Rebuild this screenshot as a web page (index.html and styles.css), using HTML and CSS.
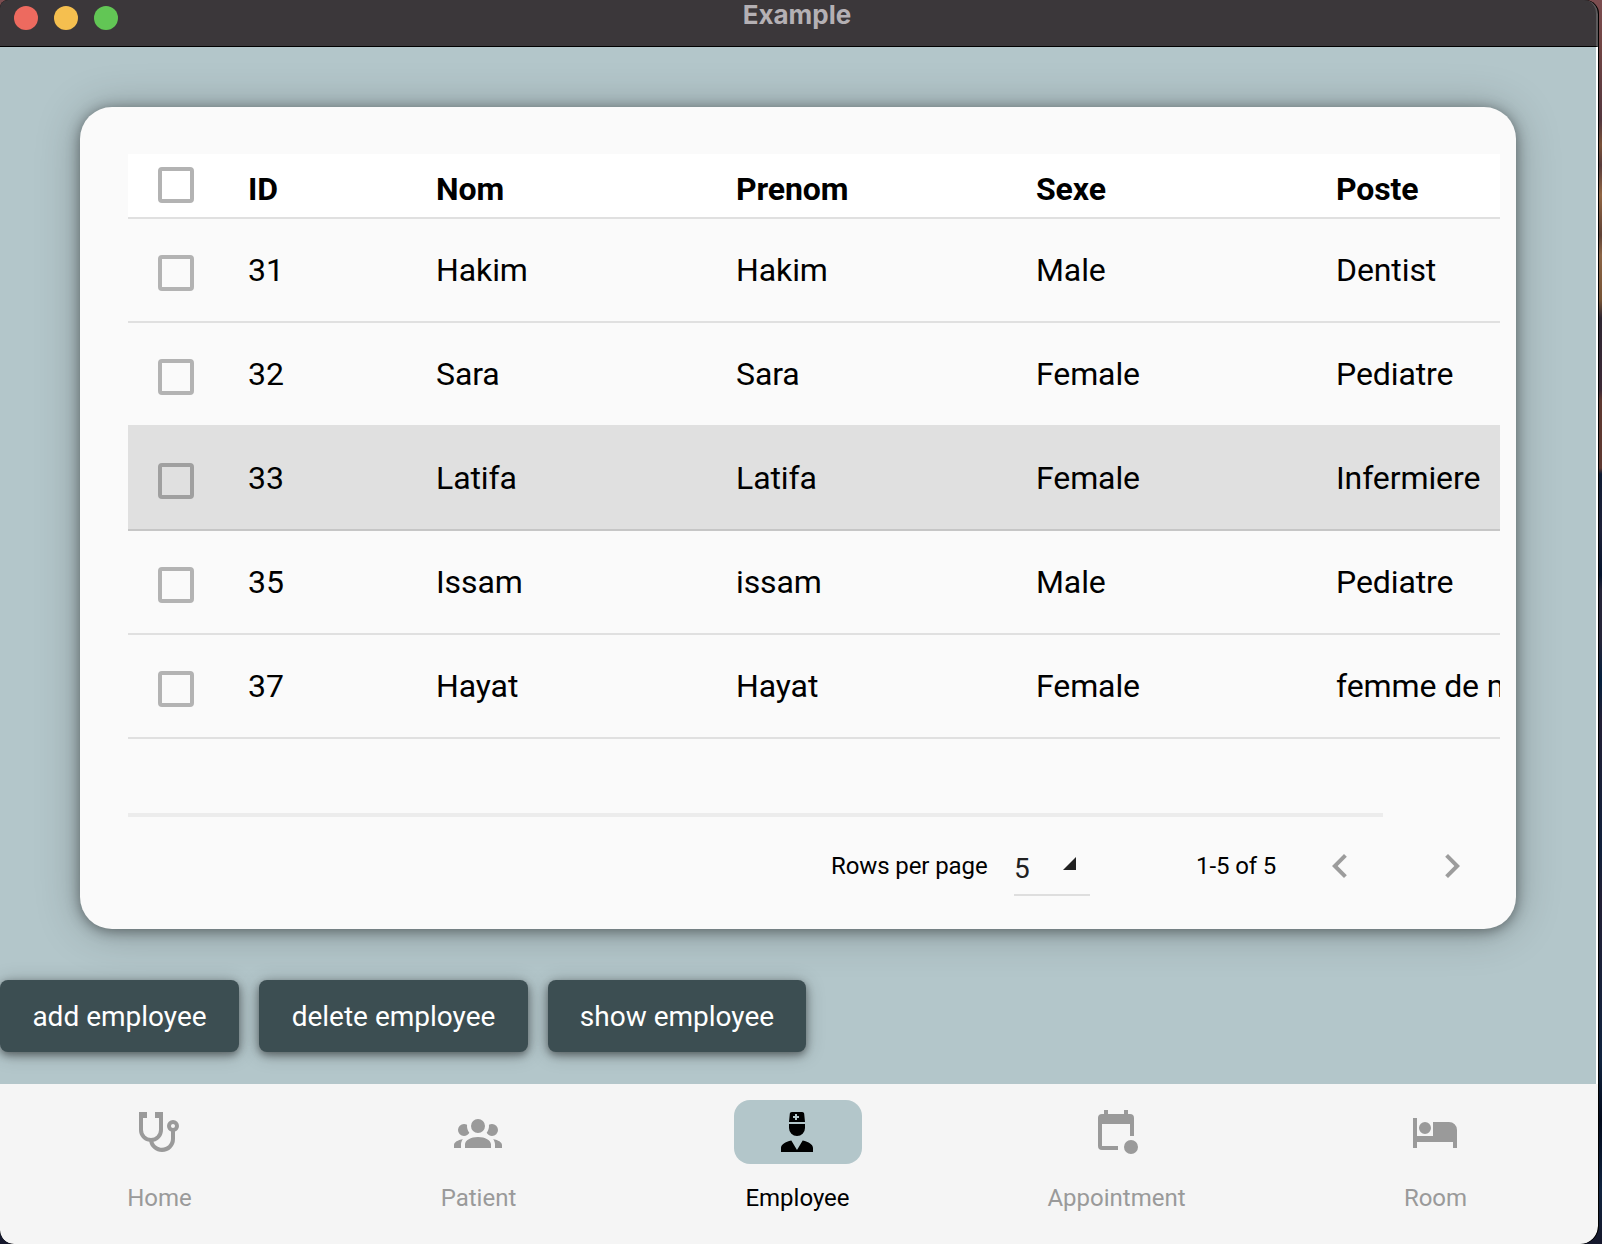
FILE: index.html
```html
<!DOCTYPE html>
<html lang="en">
<head>
<meta charset="utf-8">
<title>Example</title>
<link rel="stylesheet" href="styles.css">
</head>
<body>
<div class="window">
  <header class="titlebar">
    <div class="lights"><span class="light close"></span><span class="light minimize"></span><span class="light expand"></span></div>
    <div class="title">Example</div>
  </header>
  <main class="screen">
    <section class="card">
      <div class="table">
        <div class="row head"><span class="check"></span><span>ID</span><span>Nom</span><span>Prenom</span><span>Sexe</span><span>Poste</span></div>
        <div class="row"><span class="check"></span><span>31</span><span>Hakim</span><span>Hakim</span><span>Male</span><span>Dentist</span></div>
        <div class="row"><span class="check"></span><span>32</span><span>Sara</span><span>Sara</span><span>Female</span><span>Pediatre</span></div>
        <div class="row hovered"><span class="check"></span><span>33</span><span>Latifa</span><span>Latifa</span><span>Female</span><span>Infermiere</span></div>
        <div class="row"><span class="check"></span><span>35</span><span>Issam</span><span>issam</span><span>Male</span><span>Pediatre</span></div>
        <div class="row"><span class="check"></span><span>37</span><span>Hayat</span><span>Hayat</span><span>Female</span><span>femme de menage</span></div>
      </div>
      <div class="scrollbar"></div>
      <div class="pagination">
        <span class="rows-label">Rows per page</span>
        <span class="select"><span>5</span><svg class="caret" viewBox="0 0 13 13"><path d="M13 0V13H0Z"/></svg></span>
        <span class="range">1-5 of 5</span>
        <svg class="icon previous" viewBox="0 0 24 24"><path d="M15.41 16.58 10.83 12l4.58-4.59L14 6l-6 6 6 6 1.41-1.42Z"/></svg>
        <svg class="icon next" viewBox="0 0 24 24"><path d="M8.59 16.58 13.17 12 8.59 7.41 10 6l6 6-6 6-1.41-1.42Z"/></svg>
      </div>
    </section>
    <div class="actions">
      <button class="button add">add employee</button>
      <button class="button delete">delete employee</button>
      <button class="button show">show employee</button>
    </div>
  </main>
  <nav class="nav">
    <div class="tab"><div class="pill"><svg class="icon" viewBox="0 0 24 24"><path d="M19,8C19.56,8 20,8.43 20,9A1,1 0 0,1 19,10C18.43,10 18,9.55 18,9C18,8.43 18.43,8 19,8M2,2V11C2,13.96 4.19,16.5 7.14,16.91C7.76,19.92 10.42,22 13.5,22A6.5,6.5 0 0,0 20,15.5V11.81C21.16,11.39 22,10.29 22,9A3,3 0 0,0 19,6A3,3 0 0,0 16,9C16,10.29 16.84,11.4 18,11.81V15.41C18,17.91 16,19.92 13.5,19.92C11.5,19.92 9.82,18.7 9.22,16.9C12,16.3 14,13.8 14,11V2H10V5H12V11A4,4 0 0,1 8,15A4,4 0 0,1 4,11V5H6V2H2Z"/></svg></div><span>Home</span></div>
    <div class="tab"><div class="pill"><svg class="icon" viewBox="0 0 24 24"><path d="M12,5.5A3.5,3.5 0 0,1 15.5,9A3.5,3.5 0 0,1 12,12.5A3.5,3.5 0 0,1 8.5,9A3.5,3.5 0 0,1 12,5.5M5,8C5.56,8 6.08,8.15 6.53,8.42C6.38,9.85 6.8,11.27 7.66,12.38C7.16,13.34 6.16,14 5,14A3,3 0 0,1 2,11A3,3 0 0,1 5,8M19,8A3,3 0 0,1 22,11A3,3 0 0,1 19,14C17.84,14 16.84,13.34 16.34,12.38C17.2,11.27 17.62,9.85 17.47,8.42C17.92,8.15 18.44,8 19,8M5.5,18.25C5.5,16.18 8.41,14.5 12,14.5C15.59,14.5 18.5,16.18 18.5,18.25V20H5.5V18.25M0,20V18.5C0,17.11 1.89,15.94 4.45,15.6C3.86,16.28 3.5,17.22 3.5,18.25V20H0M24,20H20.5V18.25C20.5,17.22 20.14,16.28 19.55,15.6C22.11,15.94 24,17.11 24,18.5V20Z"/></svg></div><span>Patient</span></div>
    <div class="tab active"><div class="pill"><svg class="icon" viewBox="0 0 24 24"><path d="M14.84,16.26C17.86,16.83 20,18.29 20,20V22H4V20C4,18.29 6.14,16.83 9.16,16.26L12,21L14.84,16.26M8,8H16V10A4,4 0 0,1 12,14A4,4 0 0,1 8,10V8M8,7L8.41,2.9C8.46,2.39 8.89,2 9.41,2H14.6C15.11,2 15.54,2.39 15.59,2.9L16,7H8M12,3H11V4H10V5H11V6H12V5H13V4H12V3Z"/></svg></div><span>Employee</span></div>
    <div class="tab"><div class="pill"><svg class="icon" viewBox="0 0 24 24"><path d="M6 1H8V3H16V1H18V3H19A2 2 0 0 1 21 5V14H19V8H5V19H13V21H5A2 2 0 0 1 3 19V5A2 2 0 0 1 5 3H6ZM19.5 16A3.5 3.5 0 1 1 19.5 23A3.5 3.5 0 1 1 19.5 16Z"/></svg></div><span>Appointment</span></div>
    <div class="tab"><div class="pill"><svg class="icon" viewBox="0 0 24 24"><path d="M19,7H11V14H3V5H1V20H3V17H21V20H23V11A4,4 0 0,0 19,7M7,13A3,3 0 0,0 10,10A3,3 0 0,0 7,7A3,3 0 0,0 4,10A3,3 0 0,0 7,13Z"/></svg></div><span>Room</span></div>
  </nav>
</div>
</body>
</html>
```

FILE: styles.css
```css
* { box-sizing: border-box; }
body {
  margin: 0;
  height: 1244px;
  overflow: hidden;
  font-family: Roboto, "Liberation Sans", sans-serif;
  color: #000;
  background: linear-gradient(#7c4d50 0, #704443 50px, #54373f 120px, #7a5138 145px, #593c3c 165px, #916542 195px, #604236 235px, #8b6445 255px, #765335 300px, #2e2632 318px, #3c2936 390px, #5e3830 400px, #5e3830 468px, #101c34 474px, #1d2038 530px, #04142e 575px, #252438 590px, #252438 640px, #04203f 680px, #221f35 720px, #10203c 850px, #221f35 900px, #10233f 1060px, #020a1c 1120px, #10233f 1190px, #16182c 1244px);
}
.window {
  display: flex;
  flex-direction: column;
  width: 1599px;
  height: 1244px;
  overflow: hidden;
  border-right: 1px solid #000;
  border-radius: 8px 14px 18px 14px;
  background: #000;
}
.titlebar {
  display: grid;
  grid-template-columns: 1fr auto 1fr;
  height: 47px;
  padding-right: 2px;
  background: #3b373a;
  border-bottom: 1px solid #000;
  border-right: 2px solid #5b595b;
  border-top-right-radius: 14px;
}
.lights { display: flex; gap: 16px; padding: 6px 0 0 14px; }
.light { width: 24px; height: 24px; border-radius: 50%; }
.close { background: #ed6a5f; }
.minimize { background: #f5bf4f; }
.expand { background: #62c655; }
.title { font: 700 26px/29px Inter, sans-serif; color: #b4b0b4; }
.screen {
  display: flex;
  flex-direction: column;
  height: 1037px;
  padding-top: 59.5px;
  background: #b3c6ca;
  border-right: 2px solid #fff;
  overflow: hidden;
}
.card {
  display: flex;
  flex-direction: column;
  width: 1436px;
  height: 822px;
  margin-left: 80px;
  padding: 47.5px 16px 0 48px;
  border-radius: 32px;
  background: #fafafa;
  box-shadow: 0 2px 14px rgba(0,0,0,.42), 0 2px 44px rgba(0,0,0,.26);
}
.table { height: 658px; overflow: hidden; }
.row {
  display: grid;
  grid-template-columns: 120px 188px 300px 300px 300px 300px;
  width: 1508px;
  height: 104px;
  border-bottom: 2px solid #e0e0e0;
  font-size: 32px;
  line-height: 38px;
  letter-spacing: -.1px;
  padding-top: 32px;
  white-space: nowrap;
}
.row.head { height: 65px; padding-top: 16px; font-weight: 700; background: #fff; }
.row.hovered { background: #e0e0e0; border-bottom-color: #c6c6c6; }
.check {
  width: 36px;
  height: 36px;
  margin: 4px 0 0 30px;
  border: 4px solid #b3b3b3;
  border-radius: 4px;
}
.head .check { margin-top: -3px; }
.hovered .check { border-color: #a0a0a0; }
.scrollbar { width: 1255px; height: 4px; margin-top: 1px; background: #ececec; }
.pagination {
  display: flex;
  height: 80px;
  margin-top: 20px;
  padding-left: 703px;
  font-size: 24px;
  line-height: 28px;
  letter-spacing: -.1px;
  white-space: nowrap;
}
.rows-label { width: 183px; padding-top: 15px; }
.select {
  display: flex;
  justify-content: space-between;
  width: 76px;
  height: 59px;
  padding: 16px 14px 0 0;
  border-bottom: 2px solid #dedede;
  font-size: 28px;
  line-height: 32px;
  color: #212121;
}
.caret { width: 13px; height: 13px; margin-top: 4px; fill: #212121; }
.range { width: 121px; margin-left: 106px; padding-top: 15px; }
.icon { display: block; flex: none; width: 48px; height: 48px; fill: currentColor; }
.previous, .next { margin-top: 5px; color: #9c9c9c; }
.previous { margin-left: -1px; }
.next { margin-left: 64px; }
.actions { display: flex; gap: 20px; margin-top: 51.5px; }
.button {
  height: 72px;
  padding: 1px 0 0;
  border: 0;
  border-radius: 8px;
  background: #3c4e52;
  color: #fff;
  font: 28px/32px Roboto, sans-serif;
  box-shadow: 0 3px 8px rgba(0,0,0,.45), 0 2px 20px rgba(0,0,0,.22);
}
.add { width: 239px; }
.delete { width: 269px; }
.show { width: 258px; }
.nav {
  display: grid;
  grid-template-columns: repeat(5, 1fr);
  flex: 1;
  padding: 16px 3px 0 0;
  background: #f5f5f5;
  border-radius: 0 0 18px 14px;
}
.tab {
  display: flex;
  flex-direction: column;
  align-items: center;
  gap: 20px;
  font-size: 24px;
  line-height: 28px;
  color: #9a9a9a;
}
.pill { display: grid; place-items: center; width: 128px; height: 64px; border-radius: 16px; }
.pill .icon { margin-right: 1px; }
.active { color: #000; }
.active .pill { background: #b3c6ca; }
```
